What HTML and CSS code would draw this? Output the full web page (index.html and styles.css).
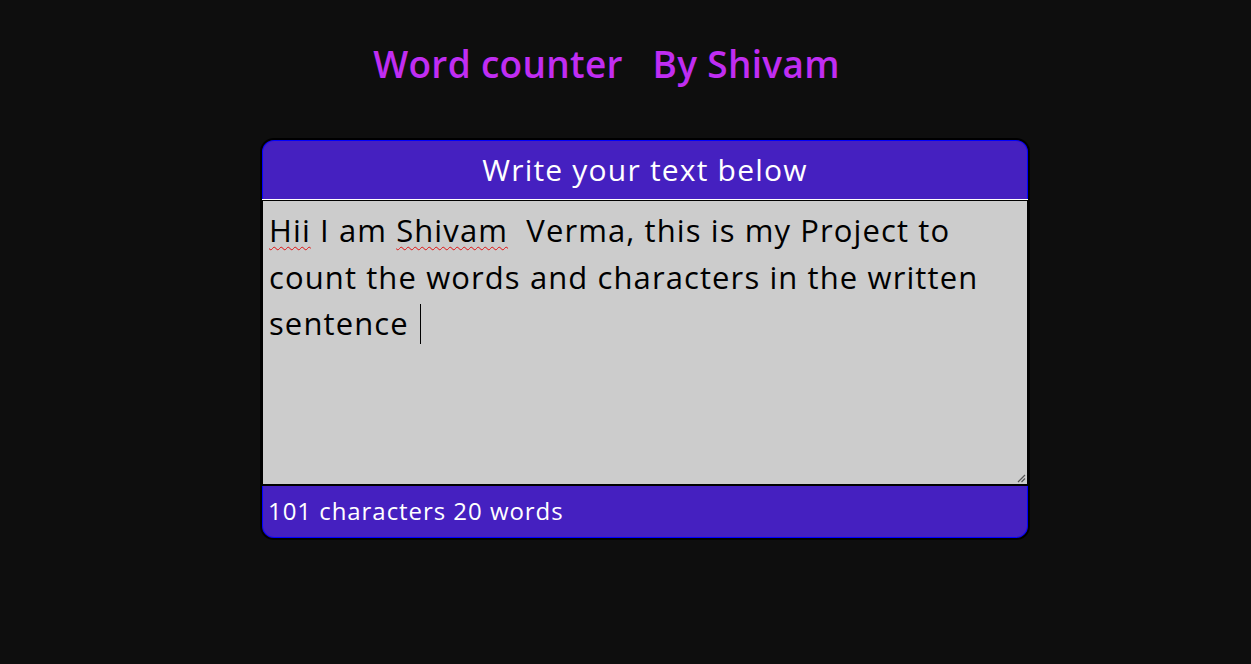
FILE: index.html
```html
<!DOCTYPE html>
<html lang="en">
<head>
<meta charset="utf-8">
<title>Word counter</title>
<link rel="stylesheet" href="styles.css">
</head>
<body>
<h1 class="title">Word counter &nbsp; By Shivam</h1>
<div class="card">
  <div class="card-head">Write your text below</div>
  <div class="editor">
    <div class="editor-text"><span class="typo">Hii</span> I am <span class="typo">Shivam</span>&nbsp; Verma, this is my Project to<br>count the words and characters in the written<br>sentence <span class="caret"></span></div>
    <svg class="grip" width="10" height="10" viewBox="0 0 10 10"><path d="M9 2 L2 9 M9 5.5 L5.5 9" stroke="#555" stroke-width="1.2" fill="none"/></svg>
  </div>
  <div class="card-foot">101 characters 20 words</div>
</div>
</body>
</html>
```

FILE: styles.css
```css
body {
  margin: 0;
  background: #0e0e0e;
  font-family: "Open Sans", "DejaVu Sans", sans-serif;
}

.title {
  margin: 0 0 50px 0;
  padding: 39px 38px 0 0;
  height: 49px;
  line-height: 50px;
  text-align: center;
  font-size: 37px;
  font-weight: 600;
  letter-spacing: 0.3px;
  color: #c02df2;
}

.card {
  margin-left: 260px;
  width: 766px;
  border: 2px solid #000;
  border-radius: 14px;
  overflow: hidden;
  background: #4520c0;
  box-shadow: inset 0 0 0 1px #0000ff;
}

.card-head {
  height: 59px;
  margin-top: 1px;
  border-bottom: 1px solid #fff;
  box-sizing: border-box;
  line-height: 58px;
  text-align: center;
  font-size: 30px;
  letter-spacing: 1.2px;
  color: #fff;
}

.editor {
  position: relative;
  height: 286px;
  box-sizing: border-box;
  background: #cccccc;
  border: 1px solid #000;
  border-bottom-width: 2px;
  padding: 6px 6px;
}

.editor-text {
  font-size: 31px;
  line-height: 46.5px;
  letter-spacing: 1.1px;
  color: #000;
  white-space: nowrap;
}

.typo {
  text-decoration: underline wavy #e01010;
  text-decoration-thickness: 1.2px;
  text-underline-offset: 4px;
}

.caret {
  display: inline-block;
  width: 1.5px;
  height: 40px;
  margin-left: 2px;
  background: #000;
  vertical-align: -9px;
}

.grip {
  position: absolute;
  right: 1px;
  bottom: 1px;
}

.card-foot {
  height: 52px;
  line-height: 50px;
  padding-left: 6px;
  font-size: 24px;
  letter-spacing: 0.95px;
  color: #fff;
}
```
